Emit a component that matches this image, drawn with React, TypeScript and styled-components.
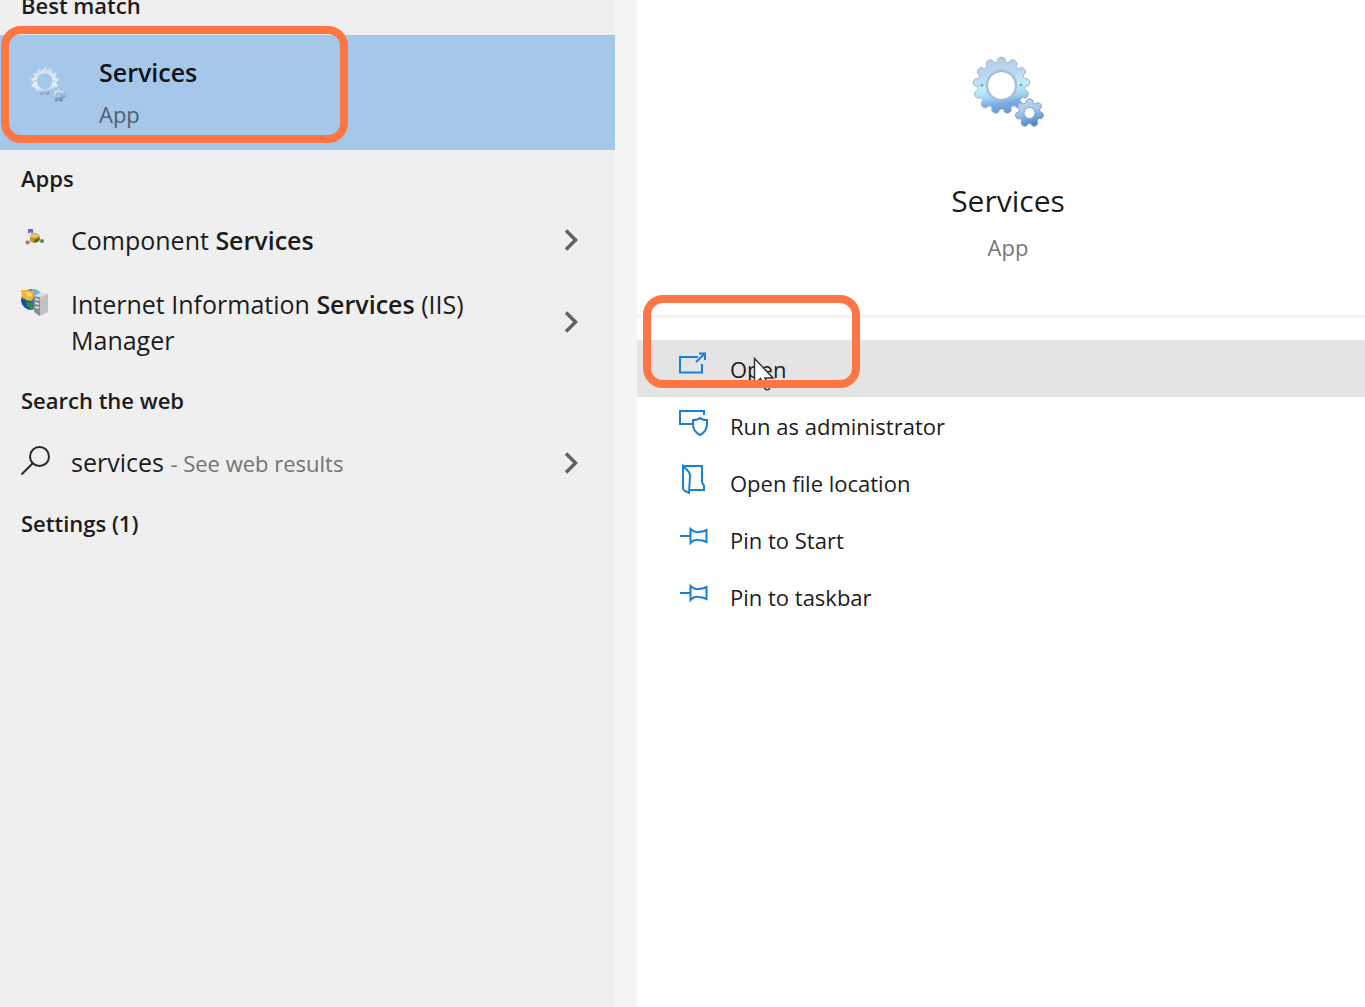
import React from "react";
import styled, { createGlobalStyle } from "styled-components";

const GlobalStyle = createGlobalStyle`
  * { box-sizing: border-box; }
  html, body { margin: 0; background: #fff; }
  body, button { font-family: "Open Sans", "Noto Sans", sans-serif; }
  h1, h2, p { margin: 0; }
`;

const Page = styled.main`
  display: grid;
  grid-template-columns: minmax(0, 615fr) 22px minmax(0, 728fr);
  min-height: 100vh;
  overflow: hidden;
  color: #1c1c1c;
`;

const Results = styled.section`
  background: #efefef;
  overflow: hidden;
`;

/* The list is scrolled a little past its first heading. */
const ResultList = styled.div`
  display: flex;
  flex-direction: column;
  margin-top: -23px;
`;

const Gutter = styled.div`
  background: #f4f4f4;
`;

const GroupHeading = styled.h2`
  height: 58px;
  padding-left: 21px;
  font-size: 22px;
  font-weight: 600;
  line-height: 57px;
`;

const BestMatch = styled.button`
  position: relative;
  display: flex;
  align-items: center;
  gap: 32px;
  height: 115px;
  padding: 0 0 0 29px;
  border: 0;
  background: #a5c7ea;
  color: #101418;
  text-align: left;

  > svg { margin-bottom: 18px; }
`;

const BestMatchText = styled.span`
  display: flex;
  flex-direction: column;
  gap: 6px;
`;

const BestMatchName = styled.span`
  font-size: 25px;
  font-weight: 600;
  line-height: 36px;
`;

const BestMatchKind = styled.span`
  color: #4f5e70;
  font-size: 22px;
  line-height: 36px;
`;

const ResultRow = styled.button`
  display: grid;
  grid-template-columns: 30px minmax(0, 420px) 1fr;
  column-gap: 20px;
  align-items: start;
  padding: 14px 36px 14px 21px;
  border: 0;
  background: transparent;
  color: #1c1c1c;
  font-size: 25px;
  line-height: 36px;
  text-align: left;

  b { font-weight: 600; }
`;

const RowIcon = styled.span`
  display: flex;
  height: 34px;
  align-items: center;
`;

const RowArrow = styled.span`
  display: flex;
  align-self: center;
  justify-content: flex-end;
`;

const Hint = styled.span`
  color: #747474;
  font-size: 22px;
`;

const Details = styled.section`
  display: flex;
  flex-direction: column;
  background: #fff;
`;

const AppHeader = styled.header`
  display: flex;
  flex-direction: column;
  align-items: center;
  height: 318px;
  padding: 53px 0 0 14px;
  border-bottom: 3px solid #f3f3f3;
`;

const AppName = styled.h1`
  margin-top: 52px;
  font-size: 30px;
  font-weight: 400;
  line-height: 40px;
`;

const AppKind = styled.p`
  margin-top: 8px;
  color: #777;
  font-size: 22px;
  line-height: 36px;
`;

const Actions = styled.nav`
  display: flex;
  flex-direction: column;
  padding-top: 22px;
`;

const Action = styled.button<{ $active?: boolean }>`
  position: relative;
  display: flex;
  align-items: center;
  gap: 22px;
  height: 57px;
  padding: 0 0 0 41px;
  border: 0;
  background: ${(p) => (p.$active ? "#e4e4e4" : "transparent")};
  color: #1c1c1c;
  font-size: 22px;
  line-height: 36px;
  text-align: left;

  > svg { margin-bottom: 8px; }
`;

const Highlight = styled.span<{ $left: number; $top: number; $width: number; $height: number }>`
  position: absolute;
  z-index: 2;
  left: ${(p) => p.$left}px;
  top: ${(p) => p.$top}px;
  width: ${(p) => p.$width}px;
  height: ${(p) => p.$height}px;
  border: 8px solid #ff7644;
  border-radius: 20px;
  pointer-events: none;
`;

const Pointer = styled.svg`
  position: absolute;
  z-index: 1;
  left: 116px;
  top: 17px;
`;

function gearPath(cx: number, cy: number, outer: number, inner: number, hole: number, teeth: number) {
  const step = (Math.PI * 2) / teeth;
  const at = (r: number, a: number) =>
    `${(cx + r * Math.sin(a)).toFixed(2)} ${(cy - r * Math.cos(a)).toFixed(2)}`;
  let d = "";
  for (let i = 0; i < teeth; i++) {
    const a = i * step;
    d += `${i ? "L" : "M"}${at(inner, a - step * 0.34)}L${at(outer - 1.5, a - step * 0.27)}`;
    d += `Q${at(outer + 1.5, a)} ${at(outer - 1.5, a + step * 0.27)}L${at(inner, a + step * 0.34)}`;
    d += `Q${at(inner - 1, a + step * 0.5)} ${at(inner, a + step * 0.66)}`;
  }
  d += `ZM${cx - hole} ${cy}a${hole} ${hole} 0 1 0 ${hole * 2} 0a${hole} ${hole} 0 1 0 ${-hole * 2} 0Z`;
  return d;
}

function GearsIcon({ size, id, light }: { size: number; id: string; light?: boolean }) {
  return (
    <svg width={size} height={size} viewBox="0 0 76 76" aria-hidden="true">
      <defs>
        <linearGradient id={`${id}-big`} x1="0.35" y1="0" x2="0.5" y2="1">
          <stop offset="0" stopColor={light ? "#d3dcee" : "#b9cce6"} />
          <stop offset="0.3" stopColor={light ? "#cfe4f8" : "#bdd6f0"} />
          <stop offset="0.55" stopColor={light ? "#def6fd" : "#bdf0f8"} />
          <stop offset="0.72" stopColor={light ? "#d8eefc" : "#a3d2f3"} />
          <stop offset="0.82" stopColor={light ? "#b4d7f8" : "#7eaee8"} />
          <stop offset="1" stopColor={light ? "#7794b8" : "#6796cf"} />
        </linearGradient>
        <linearGradient id={`${id}-small`} x1="0" y1="0" x2="0.3" y2="1">
          <stop offset="0" stopColor={light ? "#d5e5f6" : "#c5d6e8"} />
          <stop offset="0.5" stopColor={light ? "#bcdcf7" : "#a9cbee"} />
          <stop offset="1" stopColor={light ? "#6686ad" : "#5489cb"} />
        </linearGradient>
      </defs>
      <path
        d={gearPath(31.5, 32.5, 28.5, 24, 14, 13)}
        fill={`url(#${id}-big)`}
        stroke={light ? "#a6bdd8" : "#9fb4cc"}
        strokeWidth="1"
        fillRule="evenodd"
      />
      <circle cx="31.5" cy="32.5" r="15" fill="none" stroke="#9db9d4" strokeWidth="2" opacity="0.7" />
      <circle cx="12" cy="32" r="1.5" fill="#7ba8c6" />
      <circle cx="51" cy="32" r="1.5" fill="#7ba8c6" />
      <path
        d={gearPath(59.5, 60, 14.5, 11, 5.5, 7)}
        fill={`url(#${id}-small)`}
        stroke={light ? "#8ea9c8" : "#84a0c0"}
        strokeWidth="1"
        fillRule="evenodd"
      />
    </svg>
  );
}

function ComponentIcon() {
  return (
    <svg width="30" height="30" viewBox="0 0 30 30" aria-hidden="true">
      <path d="M5 7h8l5 8-8 6-6-3z" fill="#e6e8ee" />
      <path d="M7 5h5v4H7z" fill="#6a62c8" />
      <path d="M9 8l5 5M6 19l7-4M20 18l-4-3" stroke="#b9bcc6" strokeWidth="1.5" />
      <circle cx="14" cy="14" r="5" fill="#b99a2c" />
      <path d="M9 13c2-4 7-5 9-1l-4 2z" fill="#e3cb62" />
      <path d="M12 18c3 1 6 0 7-4l-4 1z" fill="#735518" />
      <circle cx="6.5" cy="18.5" r="2" fill="#dc6257" />
      <circle cx="21" cy="17" r="2" fill="#3f9444" />
    </svg>
  );
}

function IisIcon() {
  return (
    <svg width="30" height="30" viewBox="0 0 30 30" aria-hidden="true">
      <circle cx="10.5" cy="11.5" r="10.500" fill="#2f7fc4" />
      <path d="M11 1c5 0 9 3 10 6l-5 2-5-3z" fill="#6cb4e4" />
      <path d="M0 11c0 5 4 10 9 11l3-7-6-4z" fill="#184f9c" />
      <path d="M0 2l5 0 7 1 1 6-3 4-5-1-4-3z" fill="#f0b531" />
      <path d="M5 4l5 1 1 3-4 1z" fill="#fae27a" />
      <path d="M5 13l7 2 1 4-4 2-3-3z" fill="#338b42" />
      <path d="M13 8l6-3 8 1v18l-8 4-6-4z" fill="#bfc1c3" />
      <path d="M13 8l6 1v19l-6-4z" fill="#898d91" />
      <path d="M13 8l6-3 8 1-8 3z" fill="#dcdddf" />
      <path d="M14 11l4 1M14 15l4 1M14 19l4 1" stroke="#e0e6ea" strokeWidth="1.5" />
    </svg>
  );
}

function SearchIcon() {
  return (
    <svg width="30" height="30" viewBox="0 0 30 30" fill="none" stroke="#2a2a2a" strokeWidth="2" aria-hidden="true">
      <circle cx="18.5" cy="10.5" r="9.5" />
      <path d="M11.5 17.5L0.5 28.5" />
    </svg>
  );
}

function Chevron() {
  return (
    <svg width="16" height="22" viewBox="0 0 16 22" fill="none" stroke="#616161" strokeWidth="3.5" aria-hidden="true">
      <path d="M3 1.5L12.5 11L3 20.5" />
    </svg>
  );
}

const actionIcons = {
  open: (
    <>
      <path d="M20 8H2v15.500h22V15" />
      <path d="M18 13l9-8.500M21 4.500h6V11" />
    </>
  ),
  admin: (
    <>
      <path d="M14 18H2V5h24v4" />
      <path d="M22 12c2 2 4 2 7 2v4c0 5-3 9-7 11-4-2-7-6-7-11v-4c3 0 5 0 7-2z" />
    </>
  ),
  folder: (
    <>
      <path d="M5 3h19v16l2 4v4H12" />
      <path d="M5 3l5 5q2 2 2 5l-1 17-4-2q-2-1-2-3z" />
    </>
  ),
  pin: (
    <>
      <path d="M2 16h11" />
      <path d="M12.500 9q4 4 8 3 4 0 8-2v12q-4-2-8-2-4-1-8 3z" />
    </>
  ),
};

function ActionIcon({ name }: { name: keyof typeof actionIcons }) {
  return (
    <svg width="30" height="32" viewBox="0 0 30 32" fill="none" stroke="#1a80d6" strokeWidth="2" aria-hidden="true">
      {actionIcons[name]}
    </svg>
  );
}

export default function App() {
  return (
    <>
      <GlobalStyle />
      <Page>
        <Results>
          <ResultList>
            <GroupHeading>Best match</GroupHeading>
            <BestMatch type="button">
              <GearsIcon size={38} id="match" light />
              <BestMatchText>
                <BestMatchName>Services</BestMatchName>
                <BestMatchKind>App</BestMatchKind>
              </BestMatchText>
              <Highlight $left={1} $top={-9} $width={347} $height={117} />
            </BestMatch>
            <GroupHeading>Apps</GroupHeading>
            <ResultRow type="button">
              <RowIcon><ComponentIcon /></RowIcon>
              <span>Component <b>Services</b></span>
              <RowArrow><Chevron /></RowArrow>
            </ResultRow>
            <ResultRow type="button">
              <RowIcon><IisIcon /></RowIcon>
              <span>Internet Information <b>Services</b> (IIS) Manager</span>
              <RowArrow><Chevron /></RowArrow>
            </ResultRow>
            <GroupHeading>Search the web</GroupHeading>
            <ResultRow type="button">
              <RowIcon><SearchIcon /></RowIcon>
              <span>services <Hint>- See web results</Hint></span>
              <RowArrow><Chevron /></RowArrow>
            </ResultRow>
            <GroupHeading>Settings (1)</GroupHeading>
          </ResultList>
        </Results>
        <Gutter />
        <Details>
          <AppHeader>
            <GearsIcon size={76} id="app" />
            <AppName>Services</AppName>
            <AppKind>App</AppKind>
          </AppHeader>
          <Actions>
            <Action type="button" $active>
              <ActionIcon name="open" />
              Open
              <Pointer width="24" height="36" viewBox="0 0 24 36" aria-hidden="true">
                <path d="M1.5 1.5V27l6-5.5 4 9.5q2 3 5 1l-4.500-11H20z" fill="#fff" stroke="#333" strokeWidth="1.5" />
              </Pointer>
              <Highlight $left={6} $top={-45} $width={217} $height={93} />
            </Action>
            <Action type="button"><ActionIcon name="admin" />Run as administrator</Action>
            <Action type="button"><ActionIcon name="folder" />Open file location</Action>
            <Action type="button"><ActionIcon name="pin" />Pin to Start</Action>
            <Action type="button"><ActionIcon name="pin" />Pin to taskbar</Action>
          </Actions>
        </Details>
      </Page>
    </>
  );
}
